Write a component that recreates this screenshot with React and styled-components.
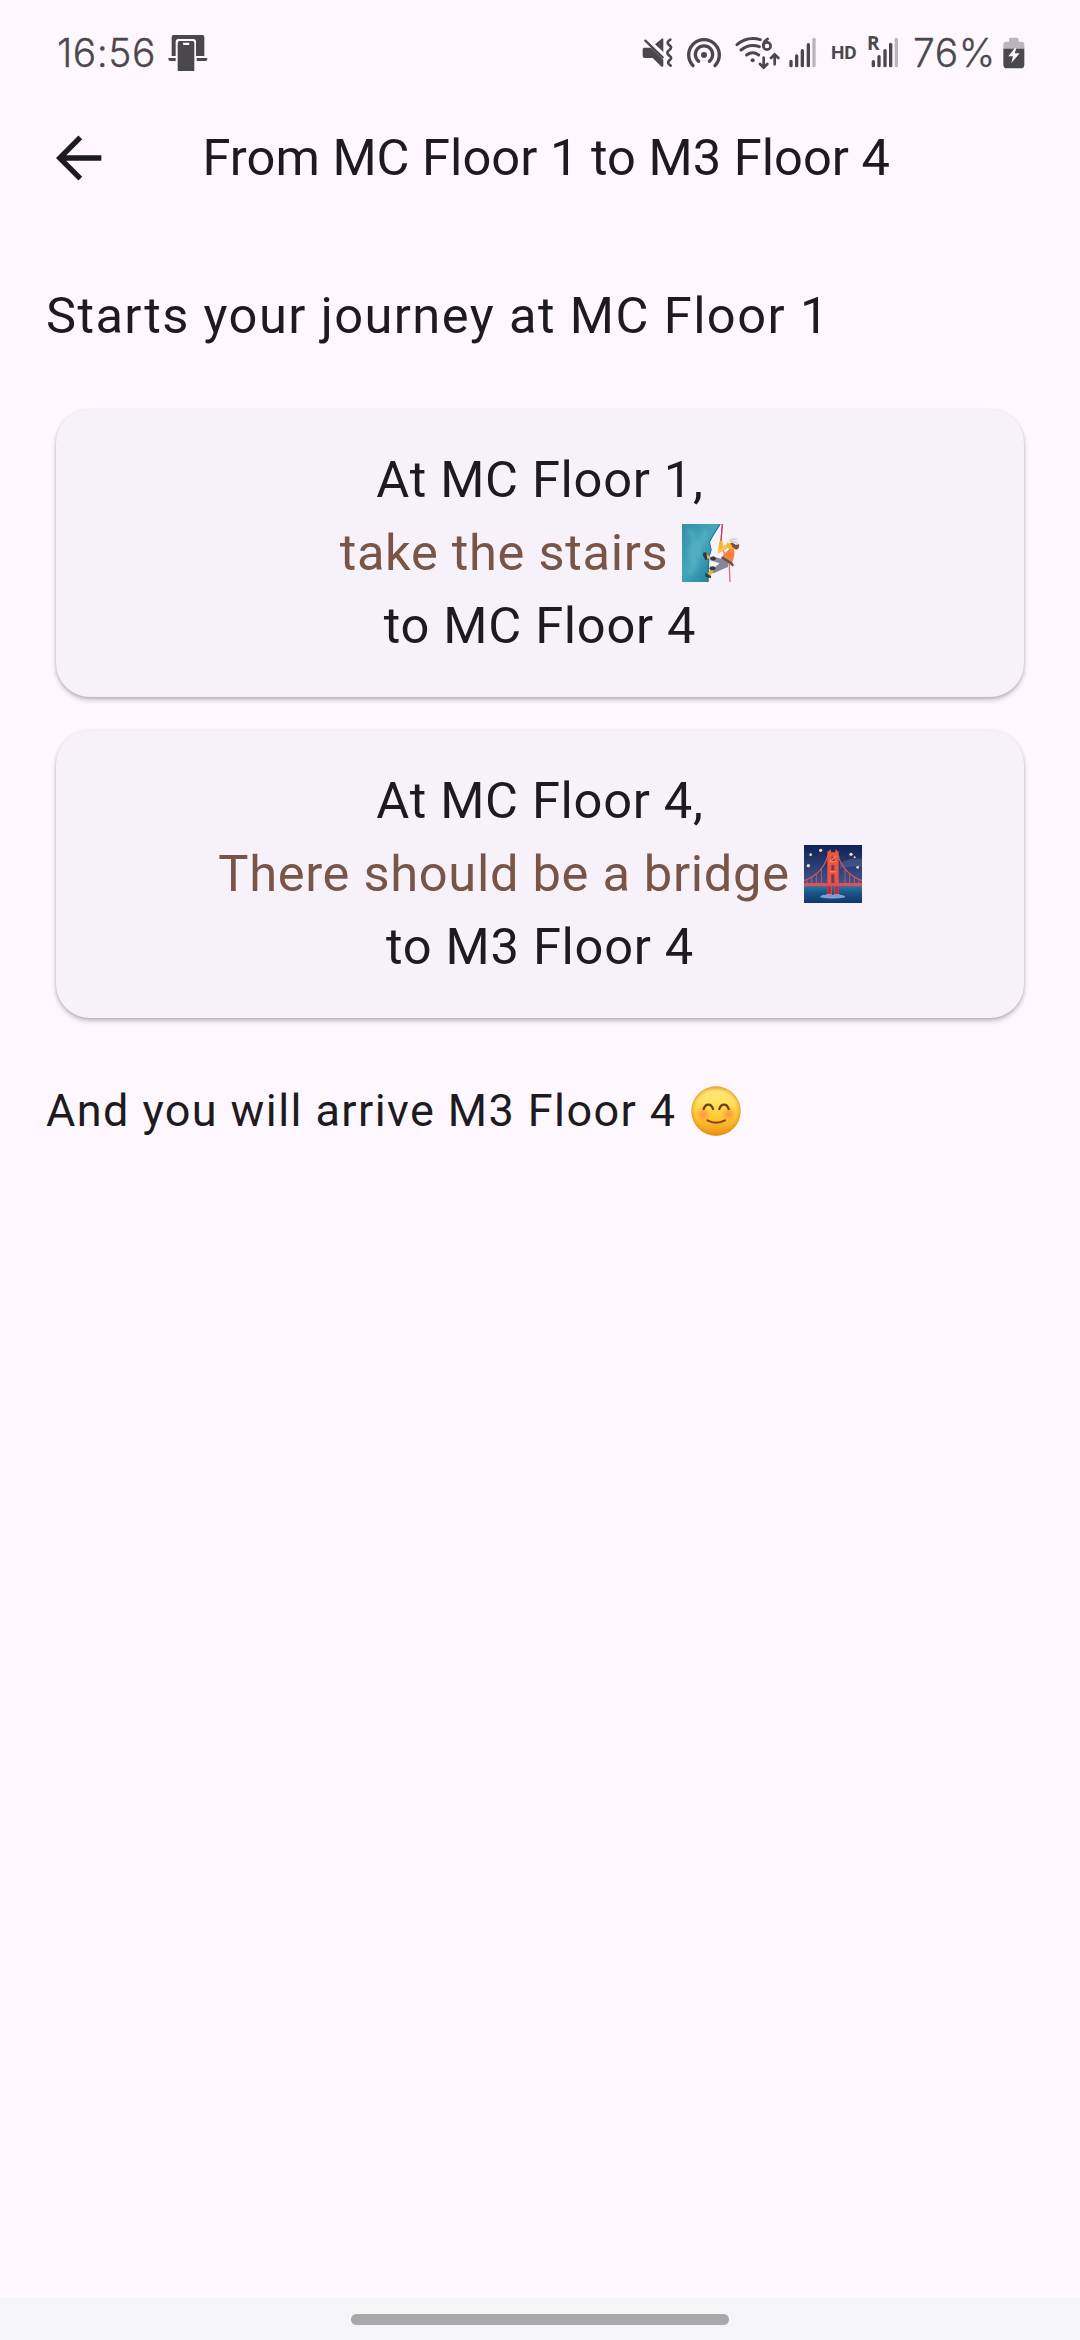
import React from "react";
import styled, { createGlobalStyle } from "styled-components";

const INK = "#1d1b20";
const STATUS = "#4b484c";

const GlobalStyle = createGlobalStyle`
  *, *::before, *::after { box-sizing: border-box; }
  body { margin: 0; background: #fef7ff; }
`;

const Screen = styled.div`
  width: 1080px;
  height: 2340px;
  display: flex;
  flex-direction: column;
  background: #fef7ff;
  color: ${INK};
  font-family: Roboto, "Liberation Sans", sans-serif;
  overflow: hidden;
`;

const StatusBar = styled.header`
  height: 79px;
  padding: 26px 55px 0 57px;
  display: flex;
  justify-content: space-between;
  color: ${STATUS};
`;

const StatusGroup = styled.div`
  height: 53px;
  display: flex;
  align-items: center;
`;

const StatusText = styled.span`
  width: ${(p) => p.$width}px;
  font: 350 39px/53px Inter, Roboto, sans-serif;
  letter-spacing: ${(p) => p.$tracking}px;
  white-space: nowrap;
  -webkit-text-stroke: 0.3px ${STATUS};
`;

const PercentBox = styled.div`
  display: flex;
  margin-left: 14px;
`;

const SmallLabel = styled.span`
  width: 25px;
  margin-left: 14px;
  font: 700 19px/53px Roboto, sans-serif;
  letter-spacing: -0.2px;
  white-space: nowrap;
`;

const Glyph = styled.svg`
  display: block;
  flex: none;
  margin-left: ${(p) => p.$gap || 0}px;
`;

const AppBar = styled.div`
  height: 158px;
  display: flex;
  align-items: center;
  padding-left: 56px;
`;

const BackButton = styled.button`
  width: 147px;
  padding: 0 0 1px;
  border: 0;
  background: none;
  color: ${INK};
  text-align: left;
`;

const Title = styled.h1`
  margin: 0 0 0 -0.5px;
  font-size: 50.625px;
  line-height: 64px;
  font-weight: 400;
  letter-spacing: 0.02px;
  white-space: nowrap;
`;

const Content = styled.main`
  flex: 1;
  padding: 43px 56px 0;
`;

const Heading = styled.p`
  margin: 0 0 57px -10px;
  font-size: 50.625px;
  line-height: 72px;
  letter-spacing: 1.41px;
  white-space: nowrap;
`;

const Steps = styled.section`
  display: flex;
  flex-direction: column;
  gap: 33px;
`;

const Card = styled.article`
  height: 288px;
  padding-bottom: 2px;
  display: flex;
  flex-direction: column;
  justify-content: center;
  border-radius: 34px;
  background: #f7f1f9;
  box-shadow: 0 3px 5px rgba(0, 0, 0, 0.22), 0 1px 3px rgba(0, 0, 0, 0.12);
`;

const Line = styled.div`
  height: 73px;
  display: flex;
  align-items: center;
  justify-content: center;
  gap: 14px;
  font-size: 50.625px;
  line-height: 73px;
  letter-spacing: 0.7px;
  color: ${(p) => (p.$accent ? "#795548" : INK)};
  white-space: nowrap;

  svg { margin-top: 2px; }
`;

const Arrival = styled.p`
  display: flex;
  align-items: center;
  gap: 14.5px;
  margin: 61px 0 0 -10px;
  font-size: 45px;
  line-height: 64px;
  letter-spacing: 1.41px;
  white-space: nowrap;
`;

const NavBar = styled.footer`
  height: 42px;
  padding-top: 16px;
  display: flex;
  justify-content: center;
  background: #f5f5f7;
`;

const Handle = styled.div`
  width: 378px;
  height: 11px;
  border-radius: 6px;
  background: #a9a9a9;
`;

const DockIcon = () => (
  <Glyph $gap={11} width="40" height="38" viewBox="383 45 120 114" fill={STATUS}>
    <path d="M394 111V53q0-5 5-5h88q5 0 5 5v58h-25V68q0-8-8-8h-45q-8 0-8 8v43z" />
    <path d="M386 117h20v9h-17q-5 0-5-9zM469 117h32q0 9-5 9h-27z" />
    <path fillRule="evenodd" d="M412 156V72q0-6 6-6h38q6 0 6 6v84zM428 71v4q0 3 3 3h13q3 0 3-3v-4z" />
  </Glyph>
);

const MuteIcon = () => (
  <Glyph width="31" height="32" viewBox="40 48 93 96" fill={STATUS}>
    <path d="M46 80h21l37 36v18q-2 6-7 2L72 111H48q-6 0-6-6V85q0-5 4-5zM79 70l20-17q5-3 5 3v37z" />
    <path d="M50 59l52 50" fill="none" stroke={STATUS} strokeWidth="7" strokeLinecap="round" />
    <path d="M125 56q-14 8-4 16q12 7 1 15q-12 8 0 17q11 7 0 14q-9 8 4 16" fill="none" stroke={STATUS} strokeWidth="8" strokeLinecap="round" />
  </Glyph>
);

const HotspotIcon = () => (
  <Glyph $gap={13} width="36" height="32" viewBox="171 48 108 96" fill="none" stroke={STATUS} strokeWidth="10" strokeLinecap="round">
    <path d="M192 134a46 46 0 1 1 66 0" />
    <path d="M209 121a26 26 0 1 1 32 0" />
    <circle cx="225" cy="102" r="9" fill={STATUS} stroke="none" />
  </Glyph>
);

const WifiIcon = () => (
  <Glyph $gap={13} width="45" height="34" viewBox="318 46 135 102" fill="none" stroke={STATUS} strokeWidth="9" strokeLinecap="round">
    <path d="M324 72Q355 46 394 57M336 88Q361 67 391 78M353 103Q371 90 389 103" />
    <circle cx="371" cy="119" r="6" fill={STATUS} stroke="none" />
    <path d="M416 55Q402 63 403 76" strokeWidth="8" />
    <circle cx="414" cy="76" r="11" strokeWidth="8" />
    <path d="M404 111v29M393 130l11 11 11-11M437 131v-29M426 112l11-11 11 11" strokeWidth="8" />
  </Glyph>
);

const SignalIcon = () => (
  <Glyph $gap={9} width="28" height="31" viewBox="480 48 84 93" fill="none" stroke={STATUS} strokeWidth="10" strokeLinecap="round">
    <path d="M486 121v13M503 105v29M520 89v45M538 71v63" />
    <path d="M555 55v79" stroke="#bcb5bd" />
  </Glyph>
);

const RoamingBox = styled.div`
  position: relative;
  width: 31px;
  height: 53px;
  margin-left: 12px;
  padding: 11px 0 0 3px;
`;

const RoamingMark = styled.span`
  position: absolute;
  left: -1px;
  top: 5px;
  font: 700 19px/24px "Open Sans", sans-serif;
`;

const RoamingSignal = () => (
  <RoamingBox>
    <Glyph width="28" height="31" viewBox="155 48 84 93" fill="none" stroke={STATUS} strokeWidth="10" strokeLinecap="round">
      <path d="M162 122v12M179 107v27M197 89v45M214 70v64" />
      <path d="M231 55v79" stroke="#bcb5bd" />
    </Glyph>
    <RoamingMark>R</RoamingMark>
  </RoamingBox>
);

const BatteryIcon = () => (
  <Glyph $gap={7} width="22" height="32" viewBox="548 48 66 96">
    <path d="M549 84V70q0-7 7-8h10v-7q0-5 5-5h19q5 0 5 5v7h10q7 1 7 8v14z" fill="#bcb5bd" />
    <path d="M549 83h63v48q0 11-11 11h-41q-11 0-11-11z" fill={STATUS} />
    <path d="M583 82l-19 24h14l-5 20 25-29h-15l5-15z" fill="#fef7ff" />
  </Glyph>
);

const BackArrow = () => (
  <Glyph width="48" height="48" viewBox="78 70 144 144" fill="none" stroke={INK} strokeWidth="16">
    <path d="M151 80l-62 62 62 62M90 142h124" />
  </Glyph>
);

const Climber = () => (
  <Glyph role="img" aria-label="climber" width="58" height="58" viewBox="37 27 173 173">
    <defs>
      <linearGradient id="rock" x1="0" y1="0" x2="1" y2="1">
        <stop offset="0" stopColor="#328da6" />
        <stop offset=".45" stopColor="#43a6bb" />
        <stop offset="1" stopColor="#1c7594" />
      </linearGradient>
      <filter id="soft"><feGaussianBlur stdDeviation="7" /></filter>
    </defs>
    <path d="M37 27h115l-22 34-11 20 5 24-5 22-3 73H37z" fill="url(#rock)" />
    <path d="M54 47q25 7 15 43t10 57l-20 29M109 45q-9 25-21 39t5 43" fill="none" stroke="#6bc0cb" strokeWidth="14" opacity=".5" filter="url(#soft)" />
    <path d="M151 27l-22 35-10 19 5 23-8 25-2 71" fill="none" stroke="#266f86" strokeWidth="3" />
    <path d="M158 27l-6 62 26 58 2 53" fill="none" stroke="#de7184" strokeWidth="4" />
    <path d="M157 27l-5 67" stroke="#b93743" strokeWidth="3" />
    <path d="M179 94l-26 17-8-7 3-24q5-5 10-1l1 15 18-9z" fill="#f4b52d" />
    <path d="M160 119l26-25q9 7 7 28l-9 29-28-15z" fill="#f58343" />
    <path d="M176 91l-30 24q-5-1-2-9l31-20z" fill="#ffc34b" />
    <path d="M176 137l-46-13-11 2 2 9 28 9-27 23 7 8 45-20z" fill="#858899" />
    <path d="M121 127l-17-4M130 161l-13 17" stroke="#efaf34" strokeWidth="10" />
    <path d="M101 112l8-1 4 22-6 2-8-15zM108 174l16 8-1 7-16-5-1-9z" fill="#343943" />
    <ellipse cx="130" cy="130" rx="8" ry="6" fill="#343943" /><ellipse cx="128" cy="159" rx="9" ry="6" fill="#343943" />
    <path d="M155 126l29 18 6 8" fill="none" stroke="#665054" strokeWidth="7" />
    <circle cx="184" cy="89" r="14" fill="#f7b530" />
    <path d="M181 83h26q3 19-9 21l-10-8z" fill="#79513d" />
    <path d="M174 85q0-18 18-19 17 2 18 20l-12 4-11-8z" fill="#eeedf4" />
    <path d="M179 76q10-7 21-3M181 80q12-3 22 5" fill="none" stroke="#aaaebf" strokeWidth="2" />
  </Glyph>
);

const Bridge = () => (
  <Glyph role="img" aria-label="bridge at night" width="58" height="58" viewBox="27 30 174 174">
    <defs>
      <linearGradient id="sky" x2="0" y2="1">
        <stop stopColor="#0f2159" /><stop offset=".65" stopColor="#40548c" />
      </linearGradient>
      <linearGradient id="water" x2="0" y2="1">
        <stop stopColor="#23789e" /><stop offset=".4" stopColor="#1b5585" /><stop offset="1" stopColor="#12366c" />
      </linearGradient>
    </defs>
    <path d="M27 30h174v174H27z" fill="url(#sky)" />
    <path d="M27 154h174v50H27z" fill="url(#water)" />
    <path d="M134 85q28-18 67-14v25q-34-5-67 5z" fill="#6475a0" opacity=".4" />
    <g fill="#eee5a0"><circle cx="47" cy="59" r="4" /><circle cx="77" cy="46" r="5" /><circle cx="40" cy="92" r="5" /><circle cx="168" cy="58" r="5" /><circle cx="179" cy="67" r="3" /><circle cx="188" cy="97" r="4" /></g>
    <path d="M27 137q56-20 72-76M129 61q17 56 72 76" fill="none" stroke="#d85450" strokeWidth="4" />
    <path d="M36 133v18M50 125v26M64 115v36M79 99v52M150 101v50M164 115v36M178 126v25M192 134v17" stroke="#bd5966" strokeWidth="3" />
    <path d="M97 181V49h6v-5h5v8h13v-8h5v5h5v132h-13v-40h-7v40z" fill="#ec5540" />
    <path d="M109 65h9v14h-9zM109 90h9v16h-9zM109 118h9v25h-9z" fill="#7d3854" />
    <path d="M103 82l21-20M104 80h21M104 110h21" stroke="#ff7955" strokeWidth="4" />
    <path d="M27 144h174v10H27z" fill="#df505d" />
    <path d="M97 154h12v26H97zM119 154h12v26h-12z" fill="#b62e4b" />
    <path d="M75 187q0-7 19-8h39q16 0 18 8-39 7-76 0z" fill="#6daae2" />
    <path d="M94 177h16v9H94zM118 177h16v9h-16z" fill="#a98ab5" />
  </Glyph>
);

const Smile = () => (
  <Glyph role="img" aria-label="smiling face" width="50" height="50" viewBox="31 35 150 150">
    <defs>
      <linearGradient id="face" x2="0" y2="1">
        <stop stopColor="#f5c445" /><stop offset=".1" stopColor="#fce577" /><stop offset=".3" stopColor="#ffe360" /><stop offset=".65" stopColor="#fdc82f" /><stop offset="1" stopColor="#ee8f13" />
      </linearGradient>
      <radialGradient id="rim">
        <stop offset=".82" stopColor="#e99a20" stopOpacity="0" /><stop offset="1" stopColor="#e08a1c" stopOpacity=".65" />
      </radialGradient>
      <radialGradient id="blush"><stop stopColor="#ff7544" stopOpacity=".65" /><stop offset="1" stopColor="#ff7544" stopOpacity="0" /></radialGradient>
    </defs>
    <circle cx="106" cy="110" r="74" fill="url(#face)" />
    <circle cx="106" cy="110" r="74" fill="url(#rim)" />
    <circle cx="67" cy="120" r="24" fill="url(#blush)" /><circle cx="145" cy="120" r="24" fill="url(#blush)" />
    <path d="M69 104q4-13 14-13t14 13M116 104q4-13 14-13t14 13" fill="none" stroke="#68401b" strokeWidth="7" strokeLinecap="round" />
    <path d="M80 138q26 14 53 0" fill="none" stroke="#873e18" strokeWidth="6" strokeLinecap="round" />
  </Glyph>
);

const steps = [
  { from: "At MC Floor 1,", action: "take the stairs", Icon: Climber, to: "to MC Floor 4" },
  { from: "At MC Floor 4,", action: "There should be a bridge", Icon: Bridge, to: "to M3 Floor 4" },
];

export default function App() {
  return (
    <Screen>
      <GlobalStyle />
      <StatusBar>
        <StatusGroup>
          <StatusText $width={100} $tracking={0.5}>16:56</StatusText>
          <DockIcon />
        </StatusGroup>
        <StatusGroup>
          <MuteIcon />
          <HotspotIcon />
          <WifiIcon />
          <SignalIcon />
          <SmallLabel>HD</SmallLabel>
          <RoamingSignal />
          <PercentBox><StatusText $width={83} $tracking={0.6}>76%</StatusText></PercentBox>
          <BatteryIcon />
        </StatusGroup>
      </StatusBar>
      <AppBar>
        <BackButton aria-label="Back"><BackArrow /></BackButton>
        <Title>From MC Floor 1 to M3 Floor 4</Title>
      </AppBar>
      <Content>
        <Heading>Starts your journey at MC Floor 1</Heading>
        <Steps>
          {steps.map(({ from, action, Icon, to }) => (
            <Card key={from}>
              <Line>{from}</Line>
              <Line $accent><span>{action}</span><Icon /></Line>
              <Line>{to}</Line>
            </Card>
          ))}
        </Steps>
        <Arrival><span>And you will arrive M3 Floor 4</span><Smile /></Arrival>
      </Content>
      <NavBar><Handle /></NavBar>
    </Screen>
  );
}
